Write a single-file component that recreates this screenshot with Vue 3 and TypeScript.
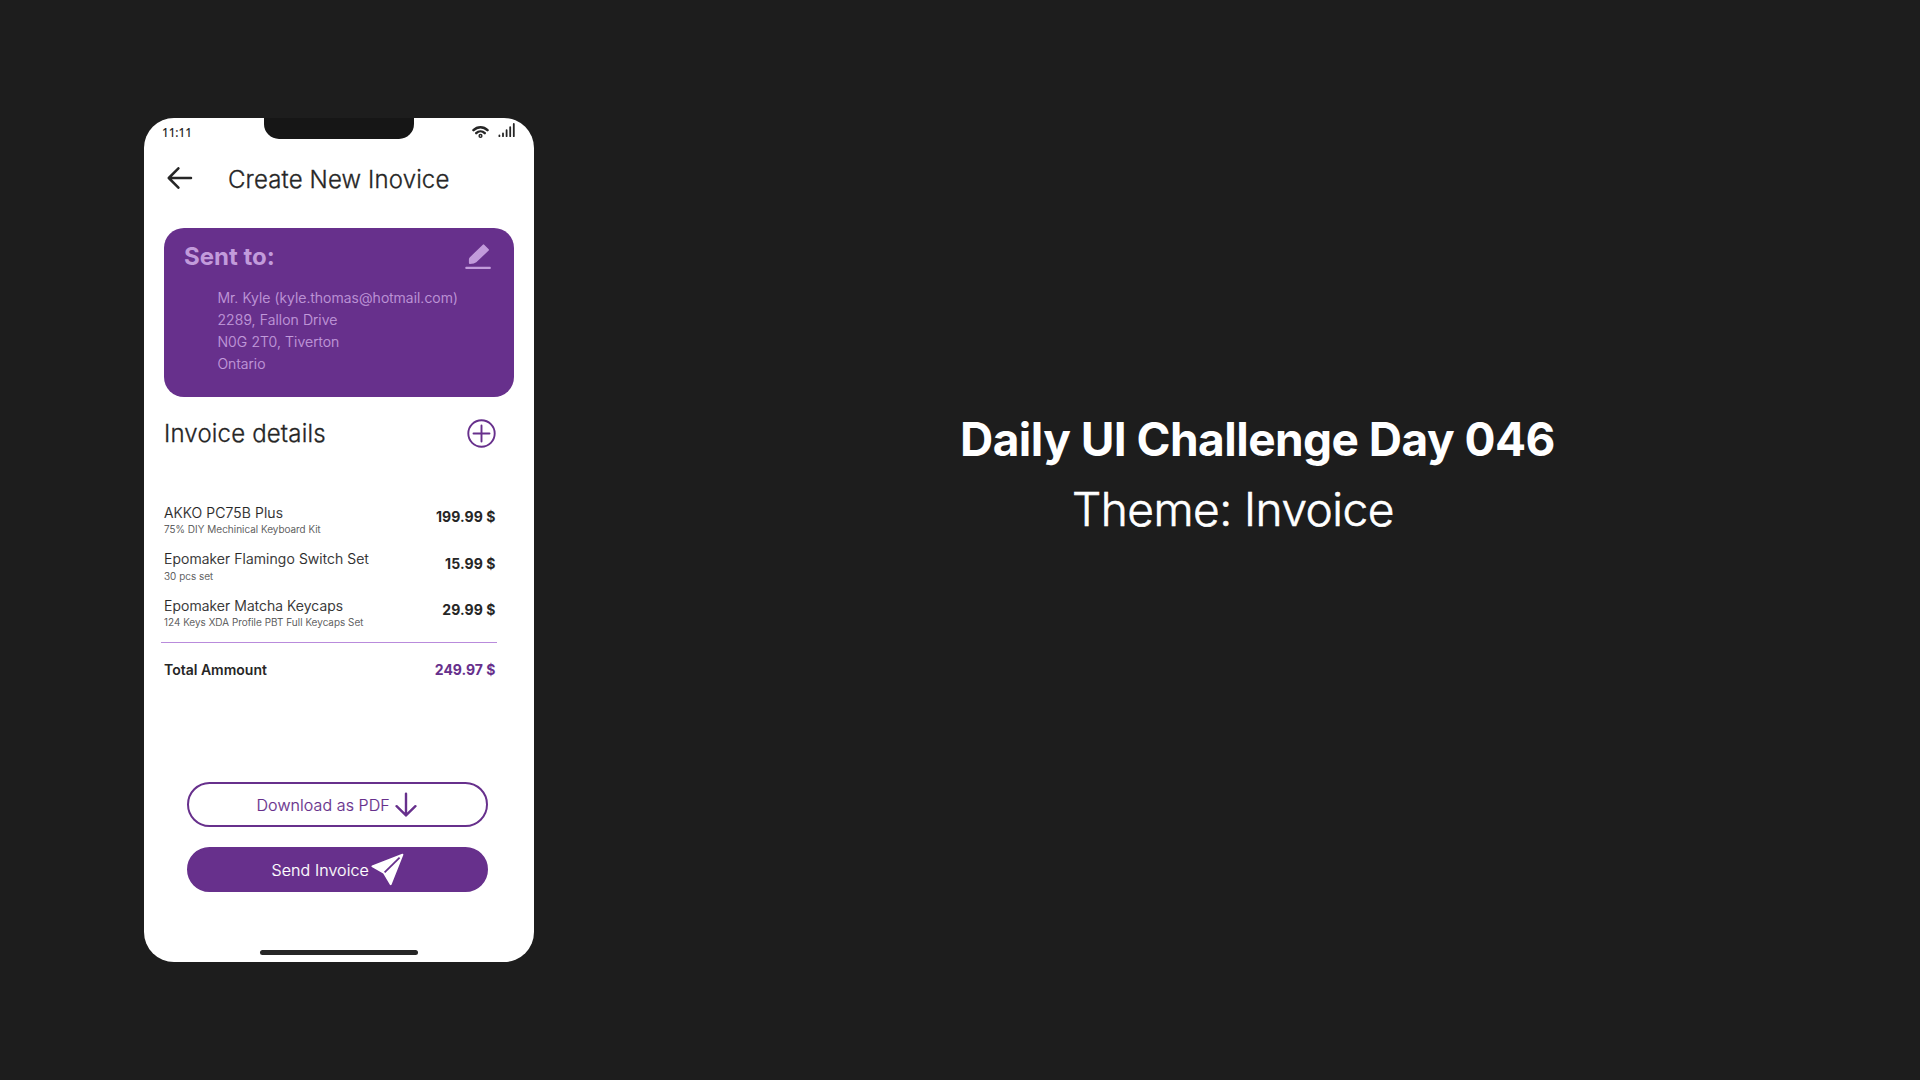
<script setup lang="ts">
interface Item {
  name: string
  note: string
  price: string
}

const address: string[] = [
  'Mr. Kyle (kyle.thomas@hotmail.com)',
  '2289, Fallon Drive',
  'N0G 2T0, Tiverton',
  'Ontario',
]

const items: Item[] = [
  { name: 'AKKO PC75B Plus', note: '75% DIY Mechinical Keyboard Kit', price: '199.99 $' },
  { name: 'Epomaker Flamingo Switch Set', note: '30 pcs set', price: '15.99 $' },
  { name: 'Epomaker Matcha Keycaps', note: '124 Keys XDA Profile PBT Full Keycaps Set', price: '29.99 $' },
]
</script>

<template>
  <main class="stage">
    <section class="phone">
      <div class="status">
        <span class="time">11:11</span>
        <div class="notch"></div>
        <div class="signals">
          <svg class="wifi" width="17" height="14" viewBox="0 0 17 14" fill="none" stroke="#262626" stroke-linecap="round">
            <path d="M1.5 5.2C5.4 1.1 11.6 1.1 15.5 5.2" stroke-width="2.5" />
            <path d="M4.2 8.2C6.7 5.7 10.3 5.7 12.8 8.2" stroke-width="2.4" />
            <circle cx="8.5" cy="10.9" r="1.4" stroke-width="1.4" />
          </svg>
          <svg class="bars" width="17" height="15" viewBox="0 0 17 15" stroke="#262626" stroke-width="1.8" stroke-linecap="round">
            <path d="M1.4 12.4V13.2M5 10.4V13.2M8.6 7.2V13.2M12.2 4.2V13.2M15.8 1V13.2" />
          </svg>
        </div>
      </div>

      <header class="head">
        <svg width="26" height="22" viewBox="0 0 26 22" fill="none" stroke="#262626" stroke-width="2.5" stroke-linecap="round" stroke-linejoin="round">
          <path d="M24 11H2M11.4 1.3L1.8 11L11.4 20.7" />
        </svg>
        <h1 class="light">Create New Inovice</h1>
      </header>

      <section class="card">
        <div class="card-head">
          <h2>Sent to:</h2>
          <svg width="26" height="26" viewBox="0 0 26 26" fill="#c29bdb">
            <path d="M17.8 .7Q18.5 0 19.2 .7L23.7 5.2Q24.3 5.9 23.7 6.5L11.3 18.3Q9.4 20 4.9 20Q3.9 20 3.9 19V15.6Q3.9 14.2 4.9 13.2Z" />
            <rect x=".3" y="22.8" width="25.5" height="2.3" rx=".8" />
          </svg>
        </div>
        <address>
          <span v-for="line in address" :key="line" class="light">{{ line }}</span>
        </address>
      </section>

      <div class="details-head">
        <h2 class="light">Invoice details</h2>
        <svg width="29" height="29" viewBox="0 0 29 29" fill="none" stroke="#67308c" stroke-width="1.9">
          <circle cx="14.5" cy="14.5" r="13.2" />
          <path d="M14.5 6.5V22.5M6.5 14.5H22.5" stroke-linecap="round" />
        </svg>
      </div>

      <ul class="items">
        <li v-for="item in items" :key="item.name">
          <div class="label">
            <span class="name light">{{ item.name }}</span>
            <span class="note light">{{ item.note }}</span>
          </div>
          <span class="price">{{ item.price }}</span>
        </li>
      </ul>
      <hr />
      <div class="total">
        <span>Total Ammount</span>
        <span class="sum">249.97 $</span>
      </div>

      <div class="actions">
        <button class="outline">
          <span class="light">Download as PDF</span>
          <svg class="down" width="22" height="25" viewBox="0 0 22 25" fill="none" stroke="#67308c" stroke-width="2.4" stroke-linecap="round" stroke-linejoin="round">
            <path d="M11 1.6V23.4M1.6 14.2L11 23.4L20.4 14.2" />
          </svg>
        </button>
        <button class="solid">
          <span class="light">Send Invoice</span>
          <svg class="plane" width="33" height="33" viewBox="0 0 33 33">
            <path d="M31.2 .8Q32.6 .6 32.3 2L20.6 31.6Q20 32.8 18.9 31.8L12.2 20.6L.8 14Q-.2 13.2 1 12.4Z" fill="#fff" />
            <path d="M13.6 19.4L28.6 4.6" stroke="#67308c" stroke-width="1.8" />
          </svg>
        </button>
      </div>
      <div class="home-bar"></div>
    </section>

    <section class="caption">
      <h1>Daily UI Challenge Day 046</h1>
      <p class="light">Theme: Invoice</p>
    </section>
  </main>
</template>

<style>
body {
  margin: 0;
  background: #1d1d1d;
}
</style>

<style scoped>
.stage {
  display: flex;
  align-items: flex-start;
  box-sizing: border-box;
  width: 1920px;
  height: 1080px;
  padding: 118px 0 0 144px;
  overflow: hidden;
  background: #1d1d1d;
  color: #262626;
  font-family: Inter, sans-serif;
  font-weight: 300;
}
h1, h2, p, ul {
  margin: 0;
  padding: 0;
  font-weight: 300;
}
svg {
  display: block;
  flex: none;
}
span, h1, h2, p {
  white-space: nowrap;
}
.light {
  -webkit-text-stroke: 0.013em currentColor;
}
.phone {
  display: flex;
  flex-direction: column;
  flex: none;
  width: 390px;
  height: 844px;
  border-radius: 30px;
  background: #fff;
  overflow: hidden;
}
.status {
  display: grid;
  grid-template-columns: 120px 150px 120px;
  grid-template-rows: 21px;
  height: 21px;
}
.time {
  padding-left: 18px;
  margin-top: 6px;
  font: 500 11.7px/17px "Noto Sans", sans-serif;
}
.notch {
  border-radius: 0 0 15px 15px;
  background: #161616;
}
.signals {
  display: flex;
  gap: 9px;
  padding: 5px 0 0 58px;
}
.wifi {
  margin-top: 2px;
}
.head {
  display: flex;
  align-items: center;
  gap: 35px;
  height: 29px;
  margin: 26px 0 0 23px;
}
.head svg {
  margin-top: -3px;
}
.head h1 {
  font-size: 24px;
  line-height: 29px;
  letter-spacing: 0.13px;
}
.card {
  box-sizing: border-box;
  width: 350px;
  height: 169px;
  margin: 34px 0 0 20px;
  padding: 14px 23px 0 20px;
  border-radius: 20px;
  background: #67308c;
  color: #c29bdb;
}
.card-head {
  display: flex;
  justify-content: space-between;
}
.card-head svg {
  margin-top: 2px;
}
.card-head h2 {
  font-size: 24px;
  font-weight: 700;
  line-height: 29px;
}
address {
  display: flex;
  flex-direction: column;
  margin: 16px 0 0 33.4px;
  font-size: 14px;
  font-style: normal;
  line-height: 22px;
  letter-spacing: 0.09px;
}
.details-head {
  display: flex;
  justify-content: space-between;
  height: 29px;
  margin: 22px 38px 0 20px;
}
.details-head h2 {
  font-size: 24px;
  line-height: 29px;
  letter-spacing: 0.17px;
}
.items {
  margin: 56px 38.5px 0 20px;
  list-style: none;
}
.items li {
  display: flex;
  justify-content: space-between;
  height: 46.5px;
}
.label {
  display: flex;
  flex-direction: column;
  margin-top: -0.5px;
}
.name {
  font-size: 14px;
  line-height: 17px;
  letter-spacing: 0.12px;
}
.note {
  margin-top: 2.5px;
  color: #505050;
  font-size: 10px;
  line-height: 12px;
  letter-spacing: 0.05px;
}
.price {
  margin-top: 4px;
  font-size: 14px;
  font-weight: 700;
  line-height: 17px;
  letter-spacing: 0.08px;
}
hr {
  width: 335.5px;
  height: 1px;
  margin: -2px 0 0 17px;
  border: 0;
  background: #b98bdc;
}
.total {
  display: flex;
  justify-content: space-between;
  margin: 18px 38.5px 0 20px;
  font-size: 14px;
  font-weight: 600;
  line-height: 17px;
}
.sum {
  color: #67308c;
  font-weight: 700;
}
.actions {
  display: flex;
  flex-direction: column;
  gap: 20px;
  margin: 104px 0 0 43px;
}
button {
  display: flex;
  align-items: center;
  box-sizing: border-box;
  width: 300.5px;
  height: 45px;
  padding: 0;
  border: 2px solid #67308c;
  border-radius: 23px;
  font: 300 16px/20px Inter, sans-serif;
  letter-spacing: 0.09px;
}
button span {
  margin-top: 1px;
}
.outline {
  padding-left: 67.5px;
  gap: 4.8px;
  background: #fff;
  color: #67308c;
}
.down {
  margin-top: 1px;
}
.solid {
  padding-left: 82.5px;
  gap: 2.6px;
  background: #67308c;
  color: #fff;
}
.home-bar {
  width: 158px;
  height: 5px;
  margin: auto 0 7px 116px;
  border-radius: 3px;
  background: #262626;
}
.caption {
  margin: 291px 0 0 426px;
  color: #fff;
  font-size: 46px;
  line-height: 60px;
}
.caption h1 {
  font-size: 46px;
  font-weight: 700;
  line-height: 60px;
  letter-spacing: -0.54px;
}
.caption p {
  margin: 10px 0 0 112px;
  letter-spacing: -0.52px;
}
</style>
